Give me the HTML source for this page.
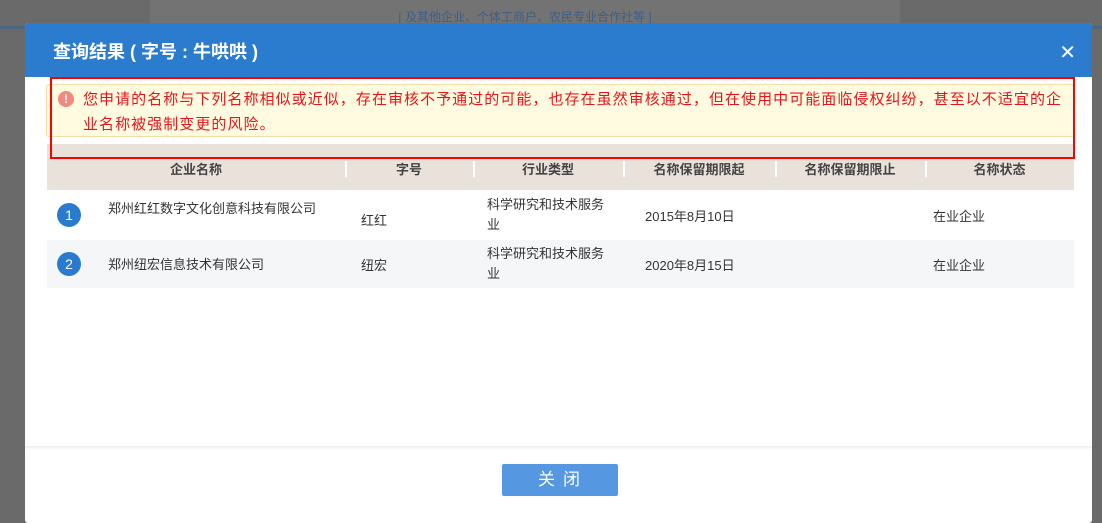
<!DOCTYPE html>
<html><head><meta charset="utf-8"><style>
*{margin:0;padding:0;box-sizing:border-box}
body{width:1102px;height:507px;overflow:hidden;background:#6a6a6a;font-family:"Liberation Sans","Noto Sans CJK SC",sans-serif;position:relative}
.bgtop{position:absolute;left:150px;top:0;width:750px;height:26px;background:#737373;color:#3e5f86;font-size:12px;text-align:center;padding-top:8px}
.bgline{position:absolute;left:0;top:26px;width:1102px;height:3px;background:#4a6680}
.modal{position:absolute;left:25px;top:23px;width:1067px;height:500px;background:#fff;border-radius:3px;overflow:hidden}
.hd{height:54px;background:#2b7bce;color:#fff;font-size:18px;font-weight:bold;padding:15px 0 0 28px}
.x{position:absolute;right:16px;top:17px;color:#fff;font-size:20px;font-weight:bold;font-family:"DejaVu Sans",sans-serif}
.alert{position:absolute;left:21px;top:61px;width:1029px;height:53px;background:#fffbe0;border:1px solid #f1dea6;border-radius:3px;color:#e8131b;font-size:15px;line-height:25px;padding:2px 0 0 36px;letter-spacing:1.05px}
.ic{position:absolute;left:11px;top:6px;width:16px;height:16px;border-radius:50%;background:#f1897f;color:#fff;font-size:12px;font-weight:bold;text-align:center;line-height:16px;letter-spacing:0}
.red{position:absolute;left:25px;top:54px;width:1025px;height:82px;border:2px solid #f00}
table{position:absolute;left:22px;top:121px;width:1027px;border-collapse:collapse;font-size:13px;color:#333}
th{background:#e9e2db;height:46px;padding-top:2px;font-weight:bold;position:relative;color:#444}
th+th:before{content:"";position:absolute;left:0;top:17px;height:16px;border-left:2px solid #fff}
td{height:50px;vertical-align:middle}
tr.b td{background:#f5f6f8;height:48px}
.n{display:inline-block;width:24px;height:24px;border-radius:50%;background:#2a7ad0;color:#fff;text-align:center;line-height:24px;font-size:14px;margin-left:10px}
.foot{position:absolute;left:0;top:423px;width:1067px;height:4px;background:linear-gradient(#eee,#fff)}
.btn{position:absolute;left:477px;top:441px;width:116px;height:32px;background:#5597e0;border-radius:2px;color:#fff;font-size:17px;text-align:center;line-height:32px;letter-spacing:8px;padding-left:6px}
</style></head><body>
<div class="bgtop">[ 及其他企业、个体工商户、农民专业合作社等 ]</div><div class="bgline"></div>
<div class="modal">
<div class="hd">查询结果 ( 字号 : 牛哄哄 )</div><div class="x">✕</div>
<div class="alert"><div class="ic">!</div>您申请的名称与下列名称相似或近似，存在审核不予通过的可能，也存在虽然审核通过，但在使用中可能面临侵权纠纷，甚至以不适宜的企业名称被强制变更的风险。</div>
<table>
<tr><th style="width:298px">企业名称</th><th style="width:128px">字号</th><th style="width:150px">行业类型</th><th style="width:152px">名称保留期限起</th><th style="width:150px">名称保留期限止</th><th>名称状态</th></tr>
<tr><td style="position:relative"><span class="n">1</span><span style="position:absolute;left:61px;top:8px">郑州红红数字文化创意科技有限公司</span></td><td style="padding-left:16px;padding-top:8px">红红</td><td style="padding-left:14px;line-height:20px">科学研究和技术服务<br>业</td><td style="padding-left:22px">2015年8月10日</td><td></td><td style="padding-left:8px">在业企业</td></tr>
<tr class="b"><td><span class="n">2</span><span style="margin-left:27px">郑州纽宏信息技术有限公司</span></td><td style="padding-left:16px">纽宏</td><td style="padding-left:14px;line-height:20px">科学研究和技术服务<br>业</td><td style="padding-left:22px">2020年8月15日</td><td></td><td style="padding-left:8px">在业企业</td></tr>
</table>
<div class="red"></div>
<div class="foot"></div>
<div class="btn">关闭</div>
</div>
</body></html>
